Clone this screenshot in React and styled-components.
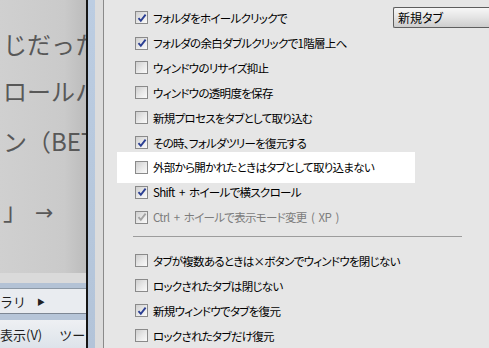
import React from 'react'
import styled, { createGlobalStyle } from 'styled-components'

const GlobalStyle = createGlobalStyle`
  html, body {
    margin: 0;
    padding: 0;
    height: 100%;
    overflow: hidden;
    background: #e6e6e6;
  }
  #root {
    height: 100%;
  }
`

const Screen = styled.div`
  display: flex;
  width: 489px;
  height: 348px;
  overflow: hidden;
  font-family: "Noto Sans CJK JP", sans-serif;
`

const Backdrop = styled.div`
  width: 86px;
  flex-shrink: 0;
  display: flex;
  flex-direction: column;
  border-right: 2px solid #151515;
  overflow: hidden;
`

const Blog = styled.div`
  flex: 1;
  display: flex;
  flex-direction: column;
  background: linear-gradient(90deg, #d0d0d0, #cacaca 75%, #bcbcbc);
`

const BlogLine = styled.div`
  margin-top: ${p => p.$top}px;
  padding-left: 3px;
  font-size: 24px;
  line-height: 30px;
  color: #585858;
  white-space: nowrap;
  .arrow {
    margin-left: 8px;
    font-family: "DejaVu Sans", sans-serif;
    font-size: 22px;
  }
`

const MenuStrip = styled.div`
  height: ${p => p.$h}px;
  background: ${p => p.$bg};
  border-bottom: ${p => (p.$line ? '1px solid #8d99a6' : 'none')};
`

const MenuRow = styled.div`
  height: ${p => p.$h}px;
  display: flex;
  align-items: center;
  gap: ${p => p.$gap}px;
  font-size: 13px;
  color: #1e1e1e;
  white-space: nowrap;
  background: ${p => p.$bg};
  border-bottom: ${p => (p.$line ? '1px solid #7d8794' : 'none')};
  .tri {
    font-size: 8px;
    color: #222;
  }
`

const Splitter = styled.div`
  display: flex;
  flex-shrink: 0;
`

const SplitBlue = styled.div`
  width: 7px;
  background: linear-gradient(180deg, #bccde2, #b3c4d9);
`

const SplitGrey = styled.div`
  width: 8px;
  background: #dcdcdc;
  border-right: 1px solid #8a8a8a;
`

const Dialog = styled.div`
  flex: 1;
  min-width: 0;
  background: #e6e6e6;
  padding: 5px 0 0 31px;
  display: flex;
  flex-direction: column;
`

const TopRow = styled.div`
  display: grid;
  grid-template-columns: 258px 140px;
  align-items: center;
`

const Row = styled.label`
  display: flex;
  align-items: center;
  gap: 5px;
  height: 25.7px;
  font-size: 11.5px;
  letter-spacing: -0.7px;
  word-spacing: 2.5px;
  font-feature-settings: "palt";
  white-space: nowrap;
  color: ${p => (p.$disabled ? '#7c7c7c' : '#000')};
  ${p =>
    p.$highlight &&
    `
    background: #fff;
    width: 280px;
    margin: -3px 0 -3px -18px;
    padding: 3px 0 3px 18px;
  `}
`

const Box = styled.span`
  width: 11px;
  height: 11px;
  flex-shrink: 0;
  border: 1px solid #8a8a8a;
  background: linear-gradient(135deg, #cfcfcf, #e9e9e9 55%, #fafafa);
  display: flex;
  align-items: center;
  justify-content: center;
`

const Select = styled.div`
  height: 19px;
  display: flex;
  align-items: center;
  padding-left: 4px;
  border: 1px solid #5e5e5e;
  border-right: none;
  border-radius: 2px 0 0 2px;
  background: linear-gradient(180deg, #f7f7f7, #e4e4e4 50%, #cdcdcd);
  font-size: 12px;
  font-feature-settings: "palt";
  color: #000;
  white-space: nowrap;
`

const Separator = styled.div`
  width: 329px;
  height: 1px;
  margin: 6px 0 12px -2px;
  background: #9c9c9c;
`

const Check = ({ checked, disabled }) => (
  <Box>
    {checked && (
      <svg width='10' height='10' viewBox='0 0 10 10'>
        <path
          d='M1.5 5.2 L3.8 7.8 L8.6 1.6'
          fill='none'
          stroke={disabled ? '#a3a3a3' : '#2b3f93'}
          strokeWidth='1.9'
        />
      </svg>
    )}
  </Box>
)

const Option = ({ label, checked, disabled, highlight }) => (
  <Row $disabled={disabled} $highlight={highlight}>
    <Check checked={checked} disabled={disabled} />
    <span>{label}</span>
  </Row>
)

const firstGroup = [
  { label: 'フォルダの余白ダブルクリックで1階層上へ', checked: true },
  { label: 'ウィンドウのリサイズ抑止' },
  { label: 'ウィンドウの透明度を保存' },
  { label: '新規プロセスをタブとして取り込む' },
  { label: 'その時、フォルダツリーを復元する', checked: true },
  { label: '外部から開かれたときはタブとして取り込まない', highlight: true },
  { label: 'Shift + ホイールで横スクロール', checked: true },
  { label: 'Ctrl + ホイールで表示モード変更 ( XP )', checked: true, disabled: true }
]

const secondGroup = [
  { label: 'タブが複数あるときは×ボタンでウィンドウを閉じない' },
  { label: 'ロックされたタブは閉じない' },
  { label: '新規ウィンドウでタブを復元', checked: true },
  { label: 'ロックされたタブだけ復元' }
]

const App = () => (
  <>
    <GlobalStyle />
    <Screen>
      <Backdrop>
        <Blog>
          <BlogLine $top={29}>じだった</BlogLine>
          <BlogLine $top={17}>ロールハ</BlogLine>
          <BlogLine $top={20}>ン（BET</BlogLine>
          <BlogLine $top={39}>」<span className='arrow'>→</span></BlogLine>
        </Blog>
        <MenuStrip $h={10} $bg='#dadada' />
        <MenuStrip $h={5} $bg='#b3c2d5' $line />
        <MenuRow $h={24} $gap={11} $bg='#e9ecf0' $line>
          <span>ラリ</span>
          <span className='tri'>▶</span>
        </MenuRow>
        <MenuStrip $h={6} $bg='#b6c5d8' />
        <MenuRow $h={28} $gap={17} $bg='linear-gradient(180deg, #eef0f3, #dde3ea)'>
          <span>表示(V)</span>
          <span>ツール</span>
        </MenuRow>
      </Backdrop>
      <Splitter>
        <SplitBlue />
        <SplitGrey />
      </Splitter>
      <Dialog>
        <TopRow>
          <Option label='フォルダをホイールクリックで' checked />
          <Select>新規タブ</Select>
        </TopRow>
        {firstGroup.map(o => (
          <Option key={o.label} {...o} />
        ))}
        <Separator />
        {secondGroup.map(o => (
          <Option key={o.label} {...o} />
        ))}
      </Dialog>
    </Screen>
  </>
)

export default App
